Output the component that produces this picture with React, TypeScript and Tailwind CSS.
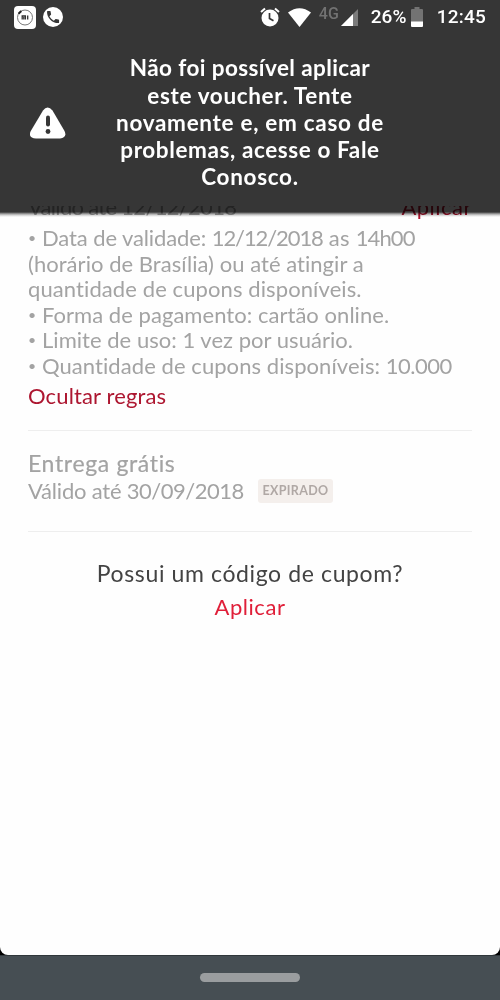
import { clsx } from "clsx";

type Part = { text: string; className: string };

const message: Part[] = [
  { text: "Não foi possível aplicar", className: "tracking-[0.4px]" },
  { text: "este voucher. Tente", className: "tracking-[0.65px]" },
  { text: "novamente e, em caso de", className: "tracking-[0.7px]" },
  { text: "problemas, acesse o Fale", className: "tracking-[0.6px]" },
  { text: "Conosco.", className: "tracking-[0.7px]" },
];

const rules: { bullet: boolean; parts: Part[] }[] = [
  {
    bullet: true,
    parts: [
      { text: "Data de validade: ", className: "tracking-[-0.1px]" },
      { text: "12/12/2018", className: "tracking-[-1.1px]" },
      { text: " as ", className: "tracking-[0.3px]" },
      { text: "14h00", className: "tracking-[-0.9px]" },
    ],
  },
  {
    bullet: false,
    parts: [{ text: "(horário de Brasília) ou até atingir a", className: "tracking-[0.04px]" }],
  },
  {
    bullet: false,
    parts: [{ text: "quantidade de cupons disponíveis.", className: "tracking-[0.1px]" }],
  },
  {
    bullet: true,
    parts: [{ text: "Forma de pagamento: cartão online.", className: "tracking-[0.04px]" }],
  },
  {
    bullet: true,
    parts: [{ text: "Limite de uso: 1 vez por usuário.", className: "tracking-[0.03px]" }],
  },
  {
    bullet: true,
    parts: [
      { text: "Quantidade de cupons disponíveis: ", className: "tracking-[0.07px]" },
      { text: "10.000", className: "tracking-[-0.5px]" },
    ],
  },
];

function StatusBar() {
  return (
    <div className="flex h-[34px] items-center justify-between px-[14px] font-['Roboto',sans-serif] text-[19px] font-medium text-white">
      <div className="flex items-center gap-[7px]">
        <svg width="22" height="23" viewBox="0 0 22 23">
          <rect width="22" height="23" rx="4" fill="#fff" />
          <circle cx="11" cy="11.5" r="7.5" fill="none" stroke="#777" />
          <path d="M4.5 7.7 7.3 5" stroke="#222" strokeWidth="2" />
          <path d="M8.2 13.5V10h3.2v3.5M9.8 11v2.5M13.7 9.5v4" fill="none" stroke="#333" strokeWidth="1.3" />
        </svg>
        <svg width="20" height="20" viewBox="0 0 20 20">
          <circle cx="10" cy="10" r="10" fill="#fff" />
          <path
            transform="translate(2 2) scale(.67)"
            d="M6.6 10.8c1.4 2.8 3.8 5.1 6.6 6.6l2.2-2.2c.3-.3.7-.4 1-.2 1.1.4 2.3.6 3.6.6.6 0 1 .4 1 1V20c0 .6-.4 1-1 1C10.6 21 3 13.4 3 4c0-.6.4-1 1-1h3.5c.6 0 1 .4 1 1 0 1.3.2 2.5.6 3.6.1.3 0 .7-.2 1z"
            fill="#363636"
          />
        </svg>
      </div>
      <div className="flex items-center">
        <svg width="20" height="20" viewBox="0 0 20 20">
          <circle cx="10" cy="11" r="8.5" fill="#fff" />
          <path d="M1 5 5 1.5M19 5 15 1.5" stroke="#fff" strokeWidth="2" />
          <path d="M9.5 6v5.5l4 2.3" fill="none" stroke="#363636" strokeWidth="1.7" />
        </svg>
        <svg className="ml-[8px]" width="23" height="19" viewBox="0 0 23 19">
          <path d="M0 4.5Q11.5-4 23 4.5L11.5 19z" fill="#fff" />
        </svg>
        <span className="mb-[6px] ml-[8px] w-[22px] text-[16px] leading-none text-[#727272]">4G</span>
        <svg width="17" height="17" viewBox="0 0 17 17">
          <path d="M17 0v17H0z" fill="#7b7b7b" />
          <path d="M12 5v12H0z" fill="#fff" />
        </svg>
        <span className="ml-[13px] w-[37px] whitespace-nowrap">26%</span>
        <svg className="ml-[3px]" width="12" height="20" viewBox="0 0 12 20">
          <path d="M3.5 0h5v2H11q1 0 1 1v12H0V3q0-1 1-1h2.5z" fill="#737373" />
          <path d="M0 14.5h12V19q0 1-1 1H1q-1 0-1-1z" fill="#fff" />
        </svg>
        <span className="ml-[14px] tracking-[0.2px]">12:45</span>
      </div>
    </div>
  );
}

function ErrorBanner() {
  return (
    <div className="absolute inset-x-0 top-0">
      <div className="h-[206px] bg-[#363636]">
        <StatusBar />
        <div className="flex h-[177px] items-center">
          <svg className="ml-[30px]" width="36" height="32" viewBox="0 0 36 32">
            <path
              d="M13 3.5Q17.5-2.5 22.5 3.5L34.5 24Q37.5 30.5 30 31.5H6Q-2.5 30.5.8 24z"
              fill="#fff"
            />
            <path d="M18 10.5v7" stroke="#363636" strokeWidth="4" strokeLinecap="round" />
            <circle cx="18" cy="24.5" r="2.4" fill="#363636" />
          </svg>
          <div className="ml-[44px] flex w-[280px] flex-col items-center text-[22.5px] font-bold leading-[27.3px] text-white">
            {message.map((line) => (
              <span key={line.text} className={clsx("whitespace-nowrap", line.className)}>
                {line.text}
              </span>
            ))}
          </div>
        </div>
      </div>
      {/* lower edge, the list still shows through it */}
      <div className="h-[11px] bg-[linear-gradient(#363636_0,#363636_6px,#8c8c8c_7.5px,#d0d0d0_9px,#fff_11px)] mix-blend-multiply" />
    </div>
  );
}

export default function App() {
  return (
    <div className="relative flex h-[1000px] w-[500px] flex-col overflow-hidden bg-black font-['Lato',sans-serif] text-[22px] text-[#a3a3a3]">
      <main className="h-[955px] rounded-b-[8px] bg-[#fefefe] px-[28px] pt-[194px]">
        <div className="flex h-[31px] justify-between leading-[26px]">
          <span className="tracking-[-0.7px]">Válido até 12/12/2018</span>
          <span className="tracking-[0.5px] text-[#b0142f]">Aplicar</span>
        </div>
        <div className="flex flex-col leading-[25.5px]">
          {rules.map((line) => (
            <div key={line.parts[0].text} className="flex h-[25.5px] whitespace-pre">
              {line.bullet && <span className="w-[14px] text-[14px]">•</span>}
              {line.parts.map((part) => (
                <span key={part.text} className={part.className}>
                  {part.text}
                </span>
              ))}
            </div>
          ))}
        </div>
        <div className="h-[53px] border-b border-[#eeeeee] pt-[5px] leading-[26px] text-[#ad1630]">
          <span className="tracking-[0.13px]">Ocultar regras</span>
        </div>
        <div className="h-[101px] border-b border-[#eeeeee] pt-[19px] leading-[27px]">
          <p className="text-[23px] tracking-[0.65px] [-webkit-text-stroke:0.2px]">Entrega grátis</p>
          <div className="flex items-center">
            <div className="w-[230px] whitespace-pre">
              <span className="tracking-[-0.2px]">Válido até </span>
              <span className="tracking-[-0.5px]">30/09/2018</span>
            </div>
            <span className="flex h-[24px] w-[75px] items-center justify-center rounded-[3px] bg-[#f4efec] text-[12.5px] font-bold tracking-[0.35px] text-[#b0a8a5]">
              EXPIRADO
            </span>
          </div>
        </div>
        <div className="flex flex-col items-center pt-[24px] leading-[34px]">
          <p className="text-[23px] tracking-[0.62px] text-[#434343]">Possui um código de cupom?</p>
          <span className="tracking-[0.55px] text-[#e01f39]">Aplicar</span>
        </div>
      </main>
      <nav className="flex h-[45px] items-start justify-center border-t border-[#30373b] bg-[#464e53] pt-[17px]">
        <div className="h-[9px] w-[100px] rounded-full bg-[#9a9d9f]" />
      </nav>
      <ErrorBanner />
    </div>
  );
}
